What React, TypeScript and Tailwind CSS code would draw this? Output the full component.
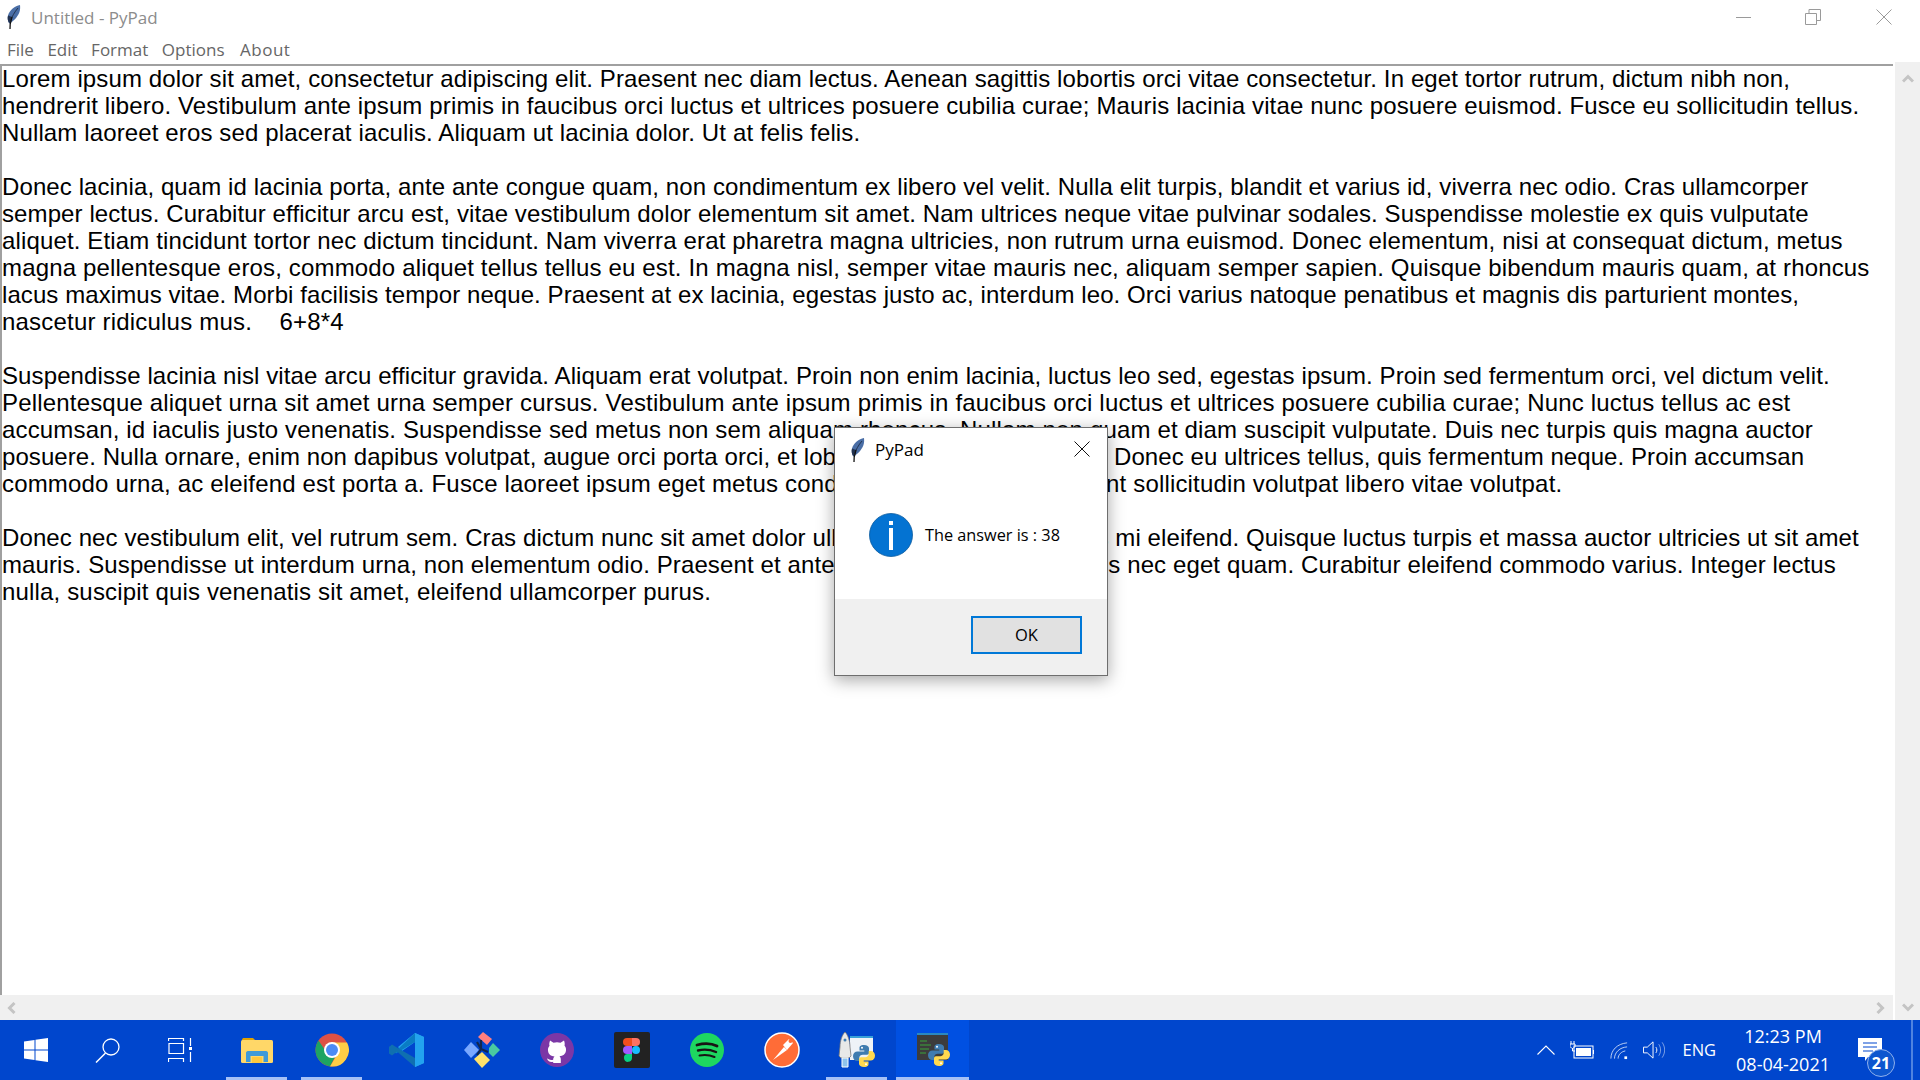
import React from "react";

const lines: [string, string][] = [
  ["Lorem ipsum dolor sit amet, consectetur adipiscing elit. Praesent nec diam lectus. Aenean sagittis lobortis orci vitae consectetur. In eget tortor rutrum, dictum nibh non,", "tracking-[0.12px]"],
  ["hendrerit libero. Vestibulum ante ipsum primis in faucibus orci luctus et ultrices posuere cubilia curae; Mauris lacinia vitae nunc posuere euismod. Fusce eu sollicitudin tellus.", "tracking-[0.144px]"],
  ["Nullam laoreet eros sed placerat iaculis. Aliquam ut lacinia dolor. Ut at felis felis.", "tracking-[0.13px]"],
  ["", ""],
  ["Donec lacinia, quam id lacinia porta, ante ante congue quam, non condimentum ex libero vel velit. Nulla elit turpis, blandit et varius id, viverra nec odio. Cras ullamcorper", "tracking-[0.1px]"],
  ["semper lectus. Curabitur efficitur arcu est, vitae vestibulum dolor elementum sit amet. Nam ultrices neque vitae pulvinar sodales. Suspendisse molestie ex quis vulputate", "tracking-[0.1px]"],
  ["aliquet. Etiam tincidunt tortor nec dictum tincidunt. Nam viverra erat pharetra magna ultricies, non rutrum urna euismod. Donec elementum, nisi at consequat dictum, metus", "tracking-[0.14px]"],
  ["magna pellentesque eros, commodo aliquet tellus tellus eu est. In magna nisl, semper vitae mauris nec, aliquam semper sapien. Quisque bibendum mauris quam, at rhoncus", "tracking-[0.16px]"],
  ["lacus maximus vitae. Morbi facilisis tempor neque. Praesent at ex lacinia, egestas justo ac, interdum leo. Orci varius natoque penatibus et magnis dis parturient montes,", "tracking-[0.08px]"],
  ["nascetur ridiculus mus.    6+8*4", "tracking-[0.2px]"],
  ["", ""],
  ["Suspendisse lacinia nisl vitae arcu efficitur gravida. Aliquam erat volutpat. Proin non enim lacinia, luctus leo sed, egestas ipsum. Proin sed fermentum orci, vel dictum velit.", "tracking-[0.11px]"],
  ["Pellentesque aliquet urna sit amet urna semper cursus. Vestibulum ante ipsum primis in faucibus orci luctus et ultrices posuere cubilia curae; Nunc luctus tellus ac est", "tracking-[0.18px]"],
  ["accumsan, id iaculis justo venenatis. Suspendisse sed metus non sem aliquam rhoncus. Nullam non quam et diam suscipit vulputate. Duis nec turpis quis magna auctor", "tracking-[0.16px]"],
  ["posuere. Nulla ornare, enim non dapibus volutpat, augue orci porta orci, et lobortis massa nisi sed odio. Donec eu ultrices tellus, quis fermentum neque. Proin accumsan", "tracking-[0.07px]"],
  ["commodo urna, ac eleifend est porta a. Fusce laoreet ipsum eget metus condimentum, vitae ac tincidunt sollicitudin volutpat libero vitae volutpat.", "tracking-[0.17px]"],
  ["", ""],
  ["Donec nec vestibulum elit, vel rutrum sem. Cras dictum nunc sit amet dolor ullamcorper, ac sed tempus mi eleifend. Quisque luctus turpis et massa auctor ultricies ut sit amet", "tracking-[0.1px]"],
  ["mauris. Suspendisse ut interdum urna, non elementum odio. Praesent et ante vel nisl dapibus a rhoncus nec eget quam. Curabitur eleifend commodo varius. Integer lectus", "tracking-[0.11px]"],
  ["nulla, suscipit quis venenatis sit amet, eleifend ullamcorper purus.", "tracking-[0.166px]"],
];

function Feather({ className }: { className: string }) {
  return (
    <svg viewBox="0 0 14 24" className={className}>
      <path d="M13 0C8 1 2.500 5 1 10.500.3 13 .7 16 2.300 18.500 6.500 16.500 10.500 12 12.300 7.500 13.200 5 13.300 2.500 13 0Z" fill="#4a6ea6" />
      <path d="M11 3C7.500 7 5 11.500 3.500 16" stroke="#1d2b44" strokeWidth="0.900" fill="none" />
      <path d="M1 10.500C.3 13 .7 16 2.300 18.500L5 12Z" fill="#22324f" />
      <path d="M5 12 3.200 19 3 24" stroke="#111" strokeWidth="1.300" fill="none" />
    </svg>
  );
}

function Python({ x = 0, y = 0, s = 1 }: { x?: number; y?: number; s?: number }) {
  const blue = "M12 1C8 1 7.500 2.800 7.500 4V6.500H12.300V7.500H5.500C3 7.500 1 9.300 1 12.200 1 15.200 3 17 5 17H7.300V14C7.300 12 9 10.800 10.800 10.800H15C16.500 10.800 17 9.800 17 8.500V4.300C17 2.500 15 1 12 1Z";
  return (
    <g transform={`translate(${x} ${y}) scale(${s})`}>
      <path d={blue} fill="#3f7cb0" />
      <path d={blue} fill="#ffd94f" transform="rotate(180 12 12)" />
      <circle cx="10" cy="3.700" r="1" fill="#fff" />
      <circle cx="14" cy="20.300" r="1" fill="#fff" />
    </g>
  );
}

function Item({ children, open = false }: { children: React.ReactNode; open?: boolean }) {
  return (
    <div className="relative w-[75px] h-full flex items-center justify-center shrink-0">
      {children}
      {open && <div className="absolute bottom-0 left-[7px] right-[7px] h-[3px] bg-[#a6c1f6]" />}
    </div>
  );
}

function SmallItem({ children }: { children: React.ReactNode }) {
  return <div className="w-[72px] h-full flex items-center justify-center shrink-0">{children}</div>;
}

function Chevron({ d }: { d: string }) {
  return (
    <svg viewBox="0 0 12 12" className="w-[12px] h-[12px]">
      <path d={d} fill="none" stroke="#c4c4c4" strokeWidth="3" />
    </svg>
  );
}

export default function App() {
  return (
    <div className="relative w-[1920px] h-[1080px] overflow-hidden bg-white flex flex-col font-['Liberation_Sans',sans-serif]">
      {/* title bar */}
      <div className="h-[34px] flex items-center font-['Open_Sans',sans-serif] text-[17px] text-[#8c8c8c] shrink-0">
        <Feather className="w-[14px] h-[24px] ml-[7px] mr-[10px]" />
        <span className="mt-[1px]">Untitled - PyPad</span>
        <div className="ml-auto flex items-center h-full">
          <div className="w-[69px] flex justify-center">
            <div className="w-[15px] h-[1px] bg-[#9a9a9a]" />
          </div>
          <div className="w-[69px] flex justify-center">
            <svg viewBox="0 0 16 16" className="w-[16px] h-[16px]">
              <path d="M.5 4.500h11v11H.5ZM4 4.500V.5h11.500v11H11.500" fill="none" stroke="#9a9a9a" />
            </svg>
          </div>
          <div className="w-[73px] flex justify-center">
            <svg viewBox="0 0 16 16" className="w-[16px] h-[16px]">
              <path d="M.5.5l15 15M15.500.5l-15 15" fill="none" stroke="#9a9a9a" />
            </svg>
          </div>
        </div>
      </div>
      {/* menu */}
      <div className="h-[28px] pt-[3px] flex items-center gap-[13.500px] pl-[7px] font-['Open_Sans',sans-serif] text-[17px] text-[#666] shrink-0">
        <span>File</span>
        <span>Edit</span>
        <span>Format</span>
        <span>Options</span>
        <span className="ml-[2px] tracking-[0.5px]">About</span>
      </div>
      {/* editor */}
      <div className="flex-1 flex min-h-0">
        <div className="w-[1893px] pt-[2px] flex flex-col">
          <div className="flex-1 border-t-[2px] border-l-[2px] border-[#a0a0a0] text-[24px] leading-[27px] text-black whitespace-pre overflow-hidden">
            {lines.map(([l, t], i) => (
              <div key={i} className={`h-[27px] mt-[-1px] mb-[1px] ${t}`}>{l}</div>
            ))}
          </div>
          <div className="h-[25px] bg-[#f0f0f0] flex items-center justify-between pl-[6px] pr-[7px]">
            <Chevron d="M8.500 1 3.500 6l5 5" />
            <Chevron d="M3.500 1l5 5-5 5" />
          </div>
        </div>
        <div className="ml-[2px] w-[25px] bg-[#f0f0f0] flex flex-col items-center justify-between pt-[11px] pb-[7px]">
          <Chevron d="M1 8.500 6 3.500l5 5" />
          <Chevron d="M1 3.500l5 5 5-5" />
        </div>
      </div>
      {/* taskbar */}
      <div className="h-[60px] bg-[#0046cd] flex items-center shrink-0 text-white">
        <SmallItem>
          <svg viewBox="0 0 24 24" className="w-[24px] h-[24px]">
            <path d="M0 3.500 10.500 2v9.500H0ZM11.500 1.800 24 0v11.500H11.500ZM0 12.500h10.500V22L0 20.500ZM11.500 12.500H24V24l-12.500-1.800Z" fill="#fff" />
          </svg>
        </SmallItem>
        <SmallItem>
          <svg viewBox="0 0 26 26" className="w-[26px] h-[26px]">
            <circle cx="16" cy="10" r="8" fill="none" stroke="#fff" strokeWidth="1.300" />
            <path d="M10.500 16 1 25.500" stroke="#fff" strokeWidth="1.500" />
          </svg>
        </SmallItem>
        <SmallItem>
          <svg viewBox="0 0 24 24" className="w-[24px] h-[24px]">
            <path d="M.5 3V.5h15V3M.5 24v-3.500h15V24M1 5.500h14.500v10H1ZM22.500 0v8M22.500 14v10" fill="none" stroke="#fff" strokeWidth="1.200" />
            <rect x="21" y="9" width="3" height="3" fill="#fff" />
          </svg>
        </SmallItem>
        <div className="w-[3px] shrink-0" />
        <Item open>
          <svg viewBox="0 0 32 26" className="w-[32px] h-[26px]">
            <path d="M1 3C1 1.500 2 1 3 1h9l3 3H1Z" fill="#e0a100" />
            <rect x="0" y="3" width="32" height="23" rx="1.500" fill="#ffd768" />
            <path d="M5 25v-9c0-1 .6-2 2-2h18c1.400 0 2 1 2 2v9h-4.500v-6h-13v6Z" fill="#3f9ad8" />
            <rect x="11" y="20" width="10" height="6" fill="#ffc83d" />
          </svg>
        </Item>
        <Item open>
          <svg viewBox="0 0 34 34" className="w-[34px] h-[34px]">
            <circle cx="17" cy="17" r="16.500" fill="#dd5144" />
            <path d="M3.500 7.500A16.500 16.500 0 0 0 15 33.400L22 20H12Z" fill="#1da462" />
            <path d="M17 9.500h15A16.500 16.500 0 0 1 15 33.400L23 20Z" fill="#ffcd46" />
            <circle cx="17" cy="17" r="8" fill="#fff" />
            <circle cx="17" cy="17" r="6" fill="#4c8bf5" />
          </svg>
        </Item>
        <Item>
          <svg viewBox="0 0 36 36" className="w-[36px] h-[36px]">
            <path d="M26 1 35 5v26l-9 4V10L13 19 9 15Z" fill="#23a3ef" />
            <path d="M26 1 8 18 3 13.500 0 15l7 6.500L26 10Z" fill="#0a7cc4" />
            <path d="M0 21.500l3 2 5-4 18 15.500V26L7 15 3 12.500 0 15Z" fill="#0f6fb0" />
            <path d="M26 1 35 5v26l-9 4Z" fill="#23a3ef" />
          </svg>
        </Item>
        <Item>
          <svg viewBox="0 0 36 36" className="w-[36px] h-[36px]">
            <path d="M14 5 19 0l9 7-5 6Z" fill="#ff7f7f" />
            <path d="M0 18l7-8 8 8-8 8Z" fill="#79a8ff" />
            <path d="M10 27l8-7 8 8-8 8Z" fill="#ffe26b" />
            <path d="M25 16l4-5 7 7-7 7-4-4Z" fill="#49c9a0" />
            <path d="M17 8v9m-4-7 4 7 7 3m-7-3-4 6" stroke="#10274f" strokeWidth="2.200" fill="none" />
          </svg>
        </Item>
        <Item>
          <svg viewBox="0 0 34 34" className="w-[34px] h-[34px]">
            <circle cx="17" cy="17" r="17" fill="#7b37a6" />
            <path d="M10 7.500l3.500 2.300c2.300-.7 4.700-.7 7 0L24 7.500c.8 2 .9 3.700.5 5 1.200 1.500 1.700 3 1.500 5-.4 3.700-3 5.400-6.500 5.800 1 .8 1.300 1.800 1.300 3.200V30h-7.600v-1.300c-3.400.7-5.300-.7-6.200-3.200 1.500.2 2.500 2 6.200 1.200 0-1.300.3-2.200 1.300-3.100-3.500-.4-6.100-2.100-6.500-5.800-.2-2 .3-3.500 1.500-5-.4-1.300-.3-3 .5-5Z" fill="#fff" />
          </svg>
        </Item>
        <Item>
          <svg viewBox="0 0 36 36" className="w-[36px] h-[36px]">
            <rect width="36" height="36" rx="2" fill="#222" />
            <path d="M18 6h-5a4 4 0 0 0 0 8h5Z" fill="#f24e1e" />
            <path d="M18 6h4a4 4 0 0 1 0 8h-4Z" fill="#ff7262" />
            <path d="M18 14h-5a4 4 0 0 0 0 8h5Z" fill="#a259ff" />
            <circle cx="22" cy="18" r="4" fill="#1abcfe" />
            <path d="M13 22h5v4a4 4 0 1 1-5-4Z" fill="#0acf83" />
          </svg>
        </Item>
        <Item>
          <svg viewBox="0 0 34 34" className="w-[34px] h-[34px]">
            <circle cx="17" cy="17" r="17" fill="#1ed760" />
            <path d="M7 12c7-2 14-2 20 1" stroke="#191414" strokeWidth="2.800" fill="none" strokeLinecap="round" />
            <path d="M8 17.500c6-1.500 12-1 18 1.500" stroke="#191414" strokeWidth="2.400" fill="none" strokeLinecap="round" />
            <path d="M9.500 22.500c5-1 10-.7 15 1.500" stroke="#191414" strokeWidth="2" fill="none" strokeLinecap="round" />
          </svg>
        </Item>
        <Item>
          <svg viewBox="0 0 36 36" className="w-[36px] h-[36px]">
            <circle cx="18" cy="18" r="17" fill="#ff6c37" stroke="#fff" strokeWidth="1.500" />
            <path d="M9 28 20 15l3 3Z" fill="#fff" />
            <path d="M19 13l6-6 4 4-6 7Z" fill="#fff" />
            <circle cx="26.500" cy="9" r="2" fill="#ff6c37" />
          </svg>
        </Item>
        <Item open>
          <svg viewBox="0 0 38 38" className="w-[38px] h-[38px]">
            <rect x="12" y="5" width="23" height="24" fill="#eef2f7" />
            <rect x="12" y="5" width="23" height="2" fill="#38a0d8" />
            <path d="M7 1c3 3 5 9 5 15l1 9-2 2H3l-2-2 1-9C2 10 4 4 7 1Z" fill="#e8e8e8" stroke="#777" strokeWidth="0.800" />
            <circle cx="7" cy="9" r="1.500" fill="#3f7cb0" />
            <path d="M4 27h6v9H4Z" fill="#8fc3ec" stroke="#fff" />
            <Python x={14} y={13} s={1} />
          </svg>
        </Item>
        <div className="relative ml-[2px] w-[73px] h-full bg-[#0050e2] flex items-center justify-center shrink-0">
          <svg viewBox="0 0 36 36" className="w-[36px] h-[36px]">
            <rect x="2" y="2" width="31" height="26" fill="#3c3c3c" />
            <rect x="2" y="1" width="31" height="2" fill="#2a88c0" />
            <path d="M5 9h7M5 13h11M5 17h9M5 21h6" stroke="#3aa43a" strokeWidth="1" />
            <Python x={12} y={11} s={1} />
          </svg>
          <div className="absolute bottom-0 left-0 right-0 h-[3px] bg-[#a6c1f6]" />
        </div>
        <div className="ml-auto flex items-center h-full">
          <svg viewBox="0 0 18 10" className="w-[18px] h-[10px] mr-[15px]">
            <path d="M.5 9.500 9 1l8.500 8.500" fill="none" stroke="#fff" strokeWidth="1.100" />
          </svg>
          <svg viewBox="0 0 24 18" className="w-[24px] h-[18px] mr-[16px]">
            <path d="M1 0v3M4 0v3M0 3h5v2.500L3 7.500H2L0 5.500ZM2.500 7.500v2.500H5" fill="none" stroke="#fff" />
            <rect x="4" y="5" width="19" height="12" fill="none" stroke="#fff" />
            <rect x="6" y="7" width="15" height="8" fill="#fff" />
            <rect x="23" y="9" width="1" height="4" fill="#fff" />
          </svg>
          <svg viewBox="0 0 20 19" className="w-[18px] h-[19px] mr-[15px]">
            <path d="M1 18.500C1 9 8 2 19 1" fill="none" stroke="#fff" opacity="0.800" />
            <path d="M5 18.500C5 11.500 11 6 19 5.500" fill="none" stroke="#fff" opacity="0.800" />
            <path d="M9 18.500C9 14 13 10.500 17 10" fill="none" stroke="#fff" opacity="0.800" />
            <rect x="16" y="16" width="3" height="3" fill="#fff" />
          </svg>
          <svg viewBox="0 0 23 18" className="w-[22px] h-[18px] mr-[17px]">
            <path d="M.5 6v6h4l6 5.500V.5l-6 5.500Z" fill="none" stroke="#fff" />
            <path d="M13.500 6c1.300 2 1.300 4 0 6" fill="none" stroke="#fff" />
            <path d="M16.500 3c2.500 4 2.500 8 0 12M20 1c3.500 5 3.500 11 0 16" fill="none" stroke="#fff" opacity="0.500" />
          </svg>
          <span className="font-['Open_Sans',sans-serif] text-[16.500px] mr-[20px]">ENG</span>
          <div className="flex flex-col items-center font-['Open_Sans',sans-serif] text-[18px] leading-[28px] mr-[28px]">
            <span>12:23 PM</span>
            <span>08-04-2021</span>
          </div>
          <div className="relative w-[24px] h-[30px] mr-[29px] mt-[6px]">
            <svg viewBox="0 0 24 24" className="w-[24px] h-[24px]">
              <path d="M0 0h24v19H10l-3 4v-4H0Z" fill="#fff" />
              <path d="M5 5h14M5 9h14M5 13h10" stroke="#0046cd" strokeWidth="1.200" />
            </svg>
            <div className="absolute left-[9px] top-[11px] w-[28px] h-[28px] rounded-full bg-[#0d56cf] border border-[#8fb0ec] flex items-center justify-center text-[16px] font-bold font-['Open_Sans',sans-serif]">
              21
            </div>
          </div>
          <div className="w-[2px] h-full bg-[#4f83e0] mr-[7px]" />
        </div>
      </div>
      {/* dialog */}
      <div className="absolute left-[834px] top-[427px] w-[274px] h-[249px] border border-[#6e6e6e] bg-white flex flex-col shadow-[0_4px_16px_rgba(0,0,0,0.35)] font-['Open_Sans',sans-serif] text-black">
        <div className="h-[44px] flex items-center pl-[16px] pr-[17px] shrink-0">
          <Feather className="w-[14px] h-[24px] mr-[10px]" />
          <span className="text-[17px]">PyPad</span>
          <svg viewBox="0 0 16 16" className="w-[16px] h-[16px] ml-auto mt-[-2px]">
            <path d="M.5.5l15 15M15.500.5l-15 15" fill="none" stroke="#111" />
          </svg>
        </div>
        <div className="flex-1 flex items-start pl-[34px] pt-[41px]">
          <svg viewBox="0 0 44 44" className="w-[44px] h-[44px] mr-[12px]">
            <circle cx="22" cy="22" r="21.500" fill="#0473d2" stroke="#0a5a9e" strokeWidth="0.800" />
            <rect x="20" y="8" width="4" height="4" fill="#fff" />
            <rect x="20" y="15" width="4" height="22" fill="#fff" />
          </svg>
          <span className="text-[16.300px] leading-[44px]">The answer is : 38</span>
        </div>
        <div className="h-[76px] bg-[#f0f0f0] flex items-start justify-end pt-[17px] pr-[25px] shrink-0">
          <div className="w-[111px] h-[38px] border-[2px] border-[#0078d7] bg-[#e1e1e1] flex items-center justify-center text-[16.500px]">
            OK
          </div>
        </div>
      </div>
    </div>
  );
}
